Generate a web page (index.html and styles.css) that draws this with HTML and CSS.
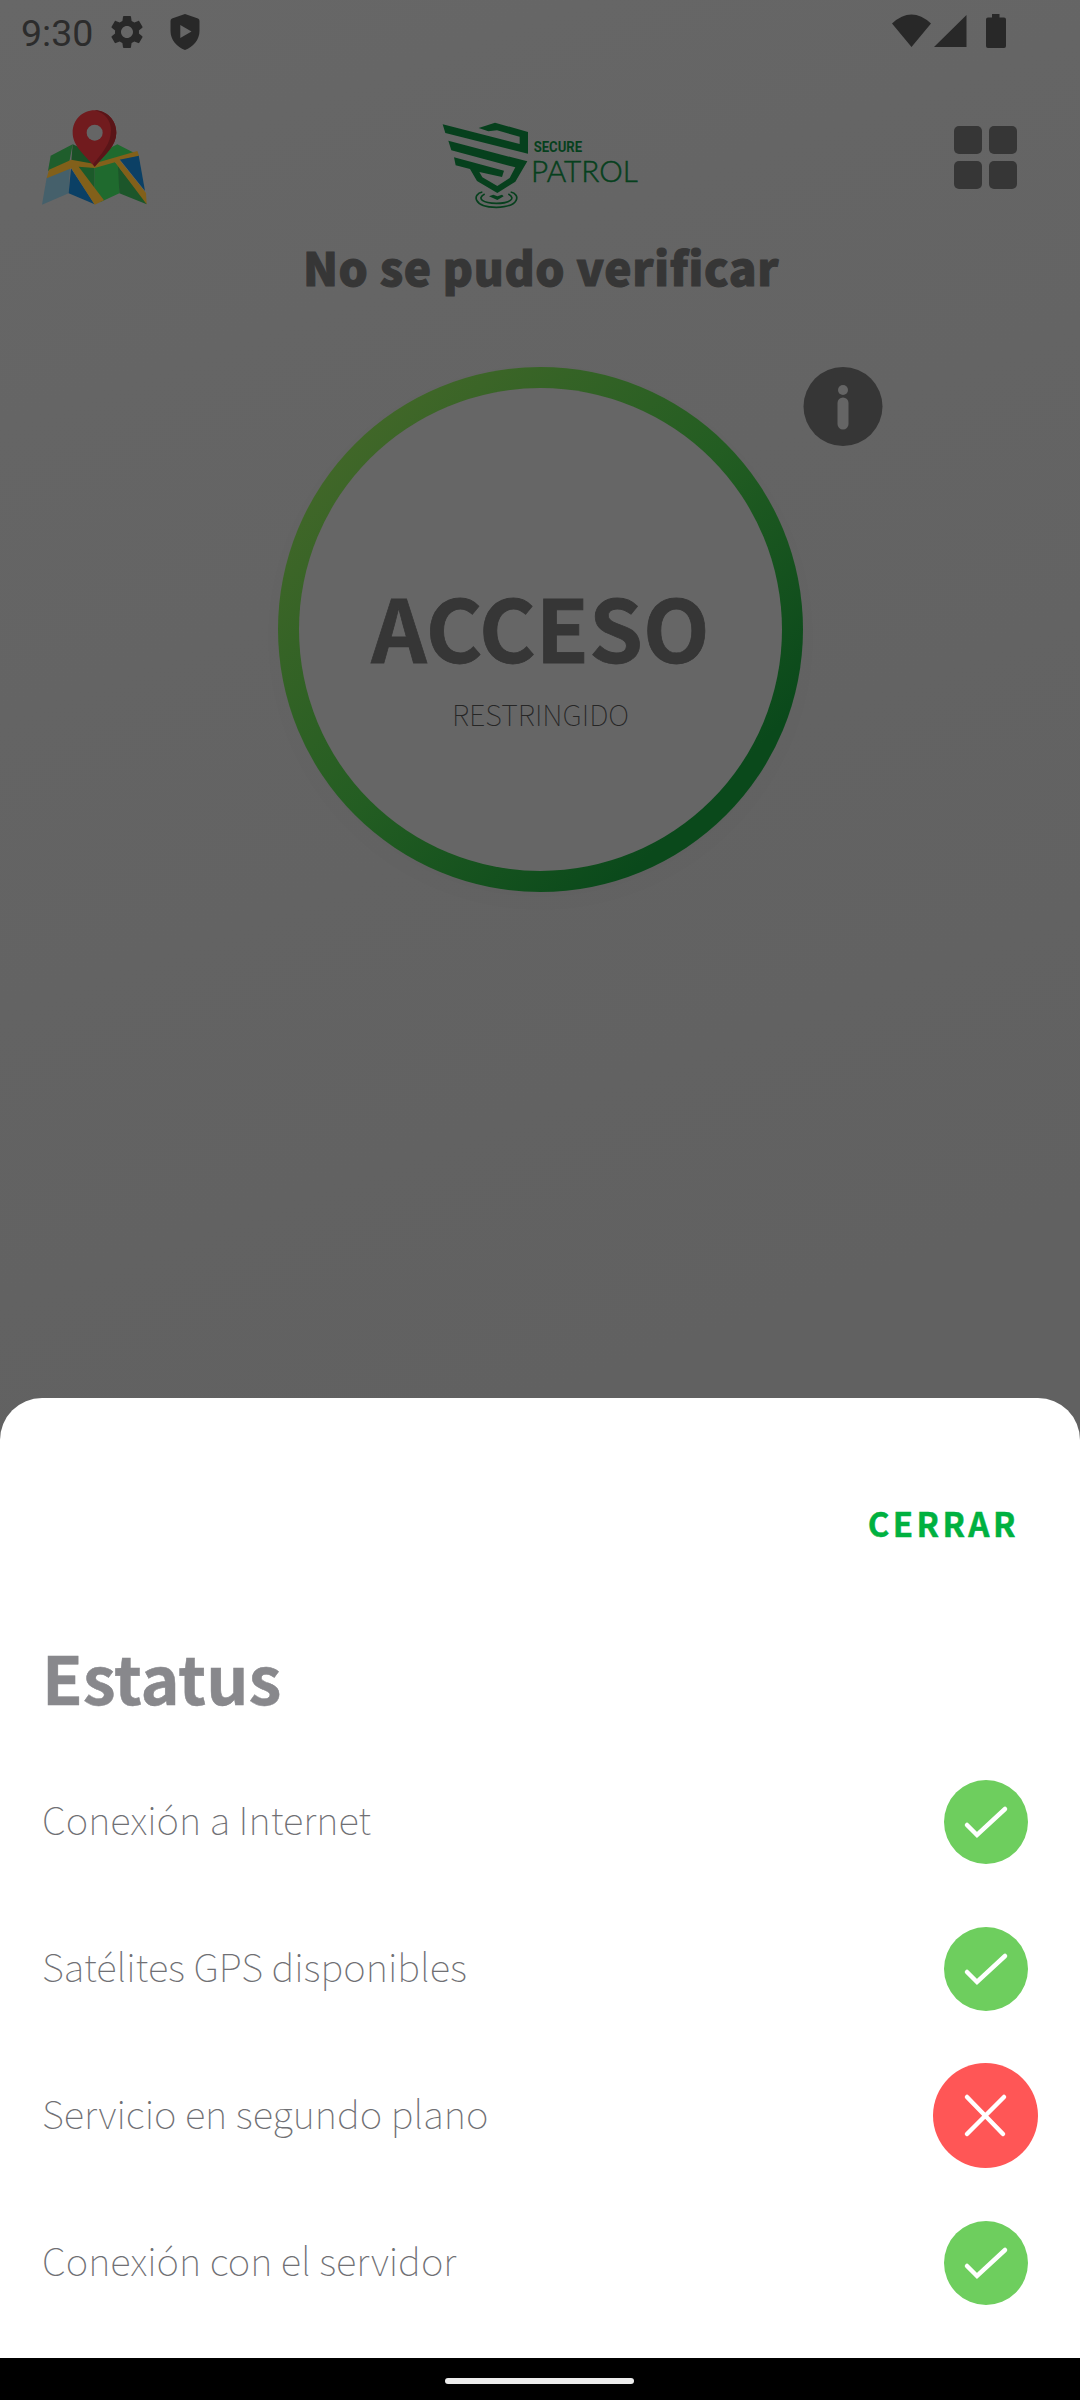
FILE: index.html
```html
<!DOCTYPE html>
<html lang="es">
<head>
<meta charset="utf-8">
<title>Secure Patrol</title>
<link rel="stylesheet" href="styles.css">
</head>
<body>
<div class="phone">
  <div class="status-bar">
    <span class="clock">9:30</span>
    <svg class="gear" viewBox="0 0 24 24"><path d="M19.14 12.94c.04-.3.06-.61.06-.94 0-.32-.02-.64-.07-.94l2.03-1.58c.18-.14.23-.41.12-.61l-1.92-3.32c-.12-.22-.37-.29-.59-.22l-2.39.96c-.5-.38-1.03-.7-1.62-.94l-.36-2.54c-.04-.24-.24-.41-.48-.41h-3.84c-.24 0-.43.17-.47.41l-.36 2.54c-.59.24-1.13.57-1.62.94l-2.39-.96c-.22-.08-.47 0-.59.22L2.74 8.87c-.12.21-.08.47.12.61l2.03 1.58c-.05.3-.09.63-.09.94s.02.64.07.94l-2.03 1.58c-.18.14-.23.41-.12.61l1.92 3.32c.12.22.37.29.59.22l2.39-.96c.5.38 1.03.7 1.62.94l.36 2.54c.05.24.24.41.48.41h3.84c.24 0 .44-.17.47-.41l.36-2.54c.59-.24 1.13-.56 1.62-.94l2.39.96c.22.08.47 0 .59-.22l1.92-3.32c.12-.22.07-.47-.12-.61l-2.01-1.58zM12 15.6c-1.98 0-3.6-1.62-3.6-3.6s1.62-3.6 3.6-3.6 3.6 1.62 3.6 3.6-1.62 3.6-3.6 3.6z"/></svg>
    <svg class="shield" viewBox="0 0 30 36"><path fill-rule="evenodd" d="M15 0 28 4.500Q29.500 5 29.500 7V17C29.500 26 23 33 15 36C7 33 .5 26 .5 17V7Q.5 5 2 4.500ZM10.300 11V24L21.500 17.500Z"/></svg>
    <svg class="signals" viewBox="0 0 115 35"><path d="M0 9.500Q19.500-8.500 39 9.500L19.500 33ZM42 33 74.500 1V33ZM100 0H107.500V3.500H112Q114 3.500 114 5.500V32Q114 34 112 34H96Q94 34 94 32V5.500Q94 3.500 96 3.500H100Z"/></svg>
  </div>
  <header class="app-bar">
    <svg class="map" viewBox="120 320 330 300">
      <path fill="#1f5e2c" d="M152 466 218 432 208 484 144 512Z"/>
      <path fill="#1a5026" d="M218 432 284 462V500L214 482Z"/>
      <path fill="#1f6a2e" d="M284 466 352 432 416 465 360 474 284 496Z"/>
      <path fill="#45606b" d="M140 532 210 502 206 579 126 613Z"/>
      <path fill="#0b4065" d="M213 504 284 612 206 579Z"/>
      <path fill="#1c5a2a" d="M230 496H284V594Z"/>
      <path fill="#1f6a2e" d="M284 500 340 480 358 500V579L300 606 284 594Z"/>
      <path fill="#1c562a" d="M354 498 436 600 440 612 358 579Z"/>
      <path fill="#0b4065" d="M358 476 416 465 435 572Z"/>
      <path fill="#82601a" d="M147 508 214 478 280 490 412 452 417 466 358 478 438 578 440 612 345 486 284 503 236 499 312 600 284 613 214 504 140 534Z"/>
      <path fill="#711b1e" d="M284 330C246 330 218 359 218 397C218 436 254 464 284 499C314 464 349 436 349 397C349 359 320 330 284 330Z"/>
      <path fill="#5a1518" d="M284 330C320 330 349 359 349 397C349 436 314 464 284 499L279 492C306 459 333 430 333 390C333 360 314 338 284 330Z"/>
      <circle cx="284" cy="397" r="24" fill="#656565"/>
    </svg>
    <svg class="logo" viewBox="60 60 600 270">
      <g fill="#06401d">
        <path d="M176 84 225 68 324 96V161L76 99 68 73 299 132V110L231 91 205 94Z"/>
        <path d="M85 122 275 172 322 184 286 245 232 279 171 243 150 207 107 196 102 172 252 212 246 231 178 216 187 232 232 258 269 234 286 202 94 151Z"/>
        <path d="M207 289 220 284 232 289 246 284 251 289 232 300Z"/>
      </g>
      <g fill="none" stroke="#06401d" stroke-width="5">
        <path d="M187 276C157 282 158 321 229 322C300 321 302 282 272 276"/>
        <path d="M194 282C168 296 190 310 229 310C268 310 290 296 265 282"/>
      </g>
      <g fill="#06401d">
        <text class="logo-secure" x="341" y="157" textLength="145" lengthAdjust="spacingAndGlyphs">SECURE</text>
        <text class="logo-patrol" x="333" y="245" textLength="320" lengthAdjust="spacingAndGlyphs">PATROL</text>
      </g>
    </svg>
    <div class="grid"><i></i><i></i><i></i><i></i></div>
  </header>
  <h1 class="title">No se pudo verificar</h1>
  <div class="access">
    <div class="ring"><div class="ring-inner">
      <strong class="access-main">ACCESO</strong>
      <span class="access-sub">RESTRINGIDO</span>
    </div></div>
    <svg class="info" viewBox="0 0 80 80"><circle cx="40" cy="39.500" r="39.500" fill="#363636"/><circle cx="40" cy="23" r="5" fill="#656565"/><path d="M40 36V57" stroke="#656565" stroke-width="11" stroke-linecap="round"/></svg>
  </div>
  <section class="sheet">
    <div class="close-row"><span class="close">CERRAR</span></div>
    <h2 class="heading">Estatus</h2>
    <ul class="list">
      <li><span>Conexión a Internet</span><svg class="ok" viewBox="0 0 84 84"><circle cx="42" cy="42" r="42"/><path d="M23 45 33 55 61 29"/></svg></li>
      <li><span>Satélites GPS disponibles</span><svg class="ok" viewBox="0 0 84 84"><circle cx="42" cy="42" r="42"/><path d="M23 45 33 55 61 29"/></svg></li>
      <li><span>Servicio en segundo plano</span><svg class="bad" viewBox="0 0 105 105"><circle cx="52.500" cy="52.500" r="52.500"/><path d="M34 34 70 71M71 34 34 71"/></svg></li>
      <li><span>Conexión con el servidor</span><svg class="ok" viewBox="0 0 84 84"><circle cx="42" cy="42" r="42"/><path d="M23 45 33 55 61 29"/></svg></li>
    </ul>
  </section>
  <nav class="nav-bar"><div class="pill"></div></nav>
</div>
</body>
</html>
```
FILE: styles.css
```css
* { box-sizing: border-box; }
body { margin: 0; }
.phone {
  position: relative;
  width: 1080px;
  height: 2400px;
  overflow: hidden;
  display: flex;
  flex-direction: column;
  font-family: "Noto Sans CJK JP", sans-serif;
  background: linear-gradient(160deg, #676767 0, #656565 400px, #616161 1500px);
}
.status-bar {
  height: 64px;
  flex: none;
  padding: 14px 73px 0 21px;
  display: flex;
  align-items: flex-start;
  fill: #282828;
}
.clock {
  font: 37.500px/38px Roboto, sans-serif;
  color: #2c2c2c;
  width: 86px;
}
.gear { width: 40px; height: 40px; margin-top: -2px; }
.shield { width: 30px; height: 36px; margin-left: 23px; }
.signals { width: 115px; height: 35px; margin-left: auto; }
.app-bar {
  height: 162px;
  flex: none;
  padding: 43px 63px 0 40px;
  display: flex;
  align-items: flex-start;
}
.map { width: 110px; height: 100px; }
.logo { width: 200px; height: 90px; margin: 13px 0 0 290px; overflow: visible; }
.logo-secure { font: 700 44px Roboto, sans-serif; }
.logo-patrol { font: 300 90px Lato, sans-serif; stroke: #06401d; stroke-width: 1.500px; }
.grid {
  margin: 19px 0 0 auto;
  display: grid;
  grid-template-columns: 28px 28px;
  grid-auto-rows: 28px;
  gap: 7px;
}
.grid i { background: #363636; border-radius: 5px; }
.title {
  margin: 0;
  height: 141px;
  flex: none;
  padding: 7px 0 0 2px;
  font-size: 46px;
  line-height: 66px;
  font-weight: 900;
  letter-spacing: 0.6px;
  -webkit-text-stroke: 1px #363636;
  text-align: center;
  color: #363636;
}
.access {
  display: grid;
  grid-template-columns: 278px 525px 1fr;
  align-items: start;
}
.ring {
  grid-column: 2;
  width: 525px;
  height: 525px;
  padding: 21px;
  border-radius: 50%;
  background: linear-gradient(135deg, #446829 10%, #235d22 50%, #0a491b 82%);
  box-shadow: 0 8px 24px rgba(0, 0, 0, 0.02);
}
.ring-inner {
  height: 100%;
  border-radius: 50%;
  background: #666;
  color: #363636;
  display: flex;
  flex-direction: column;
  align-items: center;
  padding-top: 178px;
}
.access-main {
  font-size: 86.500px;
  line-height: 120px;
  font-weight: 700;
  -webkit-text-stroke: 0.8px #363636;
}
.access-sub { font-size: 29px; line-height: 40px; font-weight: 100; margin-top: 7px; color: #262626; }
.info { width: 80px; height: 80px; }
.sheet {
  position: absolute;
  left: 0;
  right: 0;
  bottom: 42px;
  height: 960px;
  padding: 95px 42px 0;
  background: #fff;
  border-radius: 42px 42px 0 0;
}
.close-row { display: flex; justify-content: flex-end; padding-right: 19px; }
.close {
  color: #00b140;
  font-size: 33px;
  line-height: 60px;
  font-weight: 700;
  letter-spacing: 3.500px;
  -webkit-text-stroke: 0.5px #00b140;
}
.heading {
  margin: 75px 0 0;
  color: #88888c;
  font-size: 66.300px;
  line-height: 96px;
  font-weight: 700;
  -webkit-text-stroke: 0.5px #88888c;
}
.list { list-style: none; margin: 24px 0 0; padding: 0; }
.list li {
  height: 147px;
  display: flex;
  align-items: center;
  justify-content: space-between;
  font-size: 38.300px;
  font-weight: 100;
  color: #707074;
}
.list span { padding-bottom: 6px; }
.ok { width: 84px; height: 84px; margin-right: 10.500px; fill: #6ece5e; }
.bad { width: 105px; height: 105px; fill: #ff5656; }
.list path { fill: none; stroke: #fff; stroke-width: 4.500; stroke-linecap: round; stroke-linejoin: miter; }
.nav-bar {
  position: absolute;
  left: 0;
  right: 0;
  bottom: 0;
  height: 42px;
  background: #000;
  display: flex;
  align-items: center;
  justify-content: center;
}
.pill { width: 189px; height: 6px; border-radius: 3px; background: #ececec; margin: 4px 1px 0 0; }
```
